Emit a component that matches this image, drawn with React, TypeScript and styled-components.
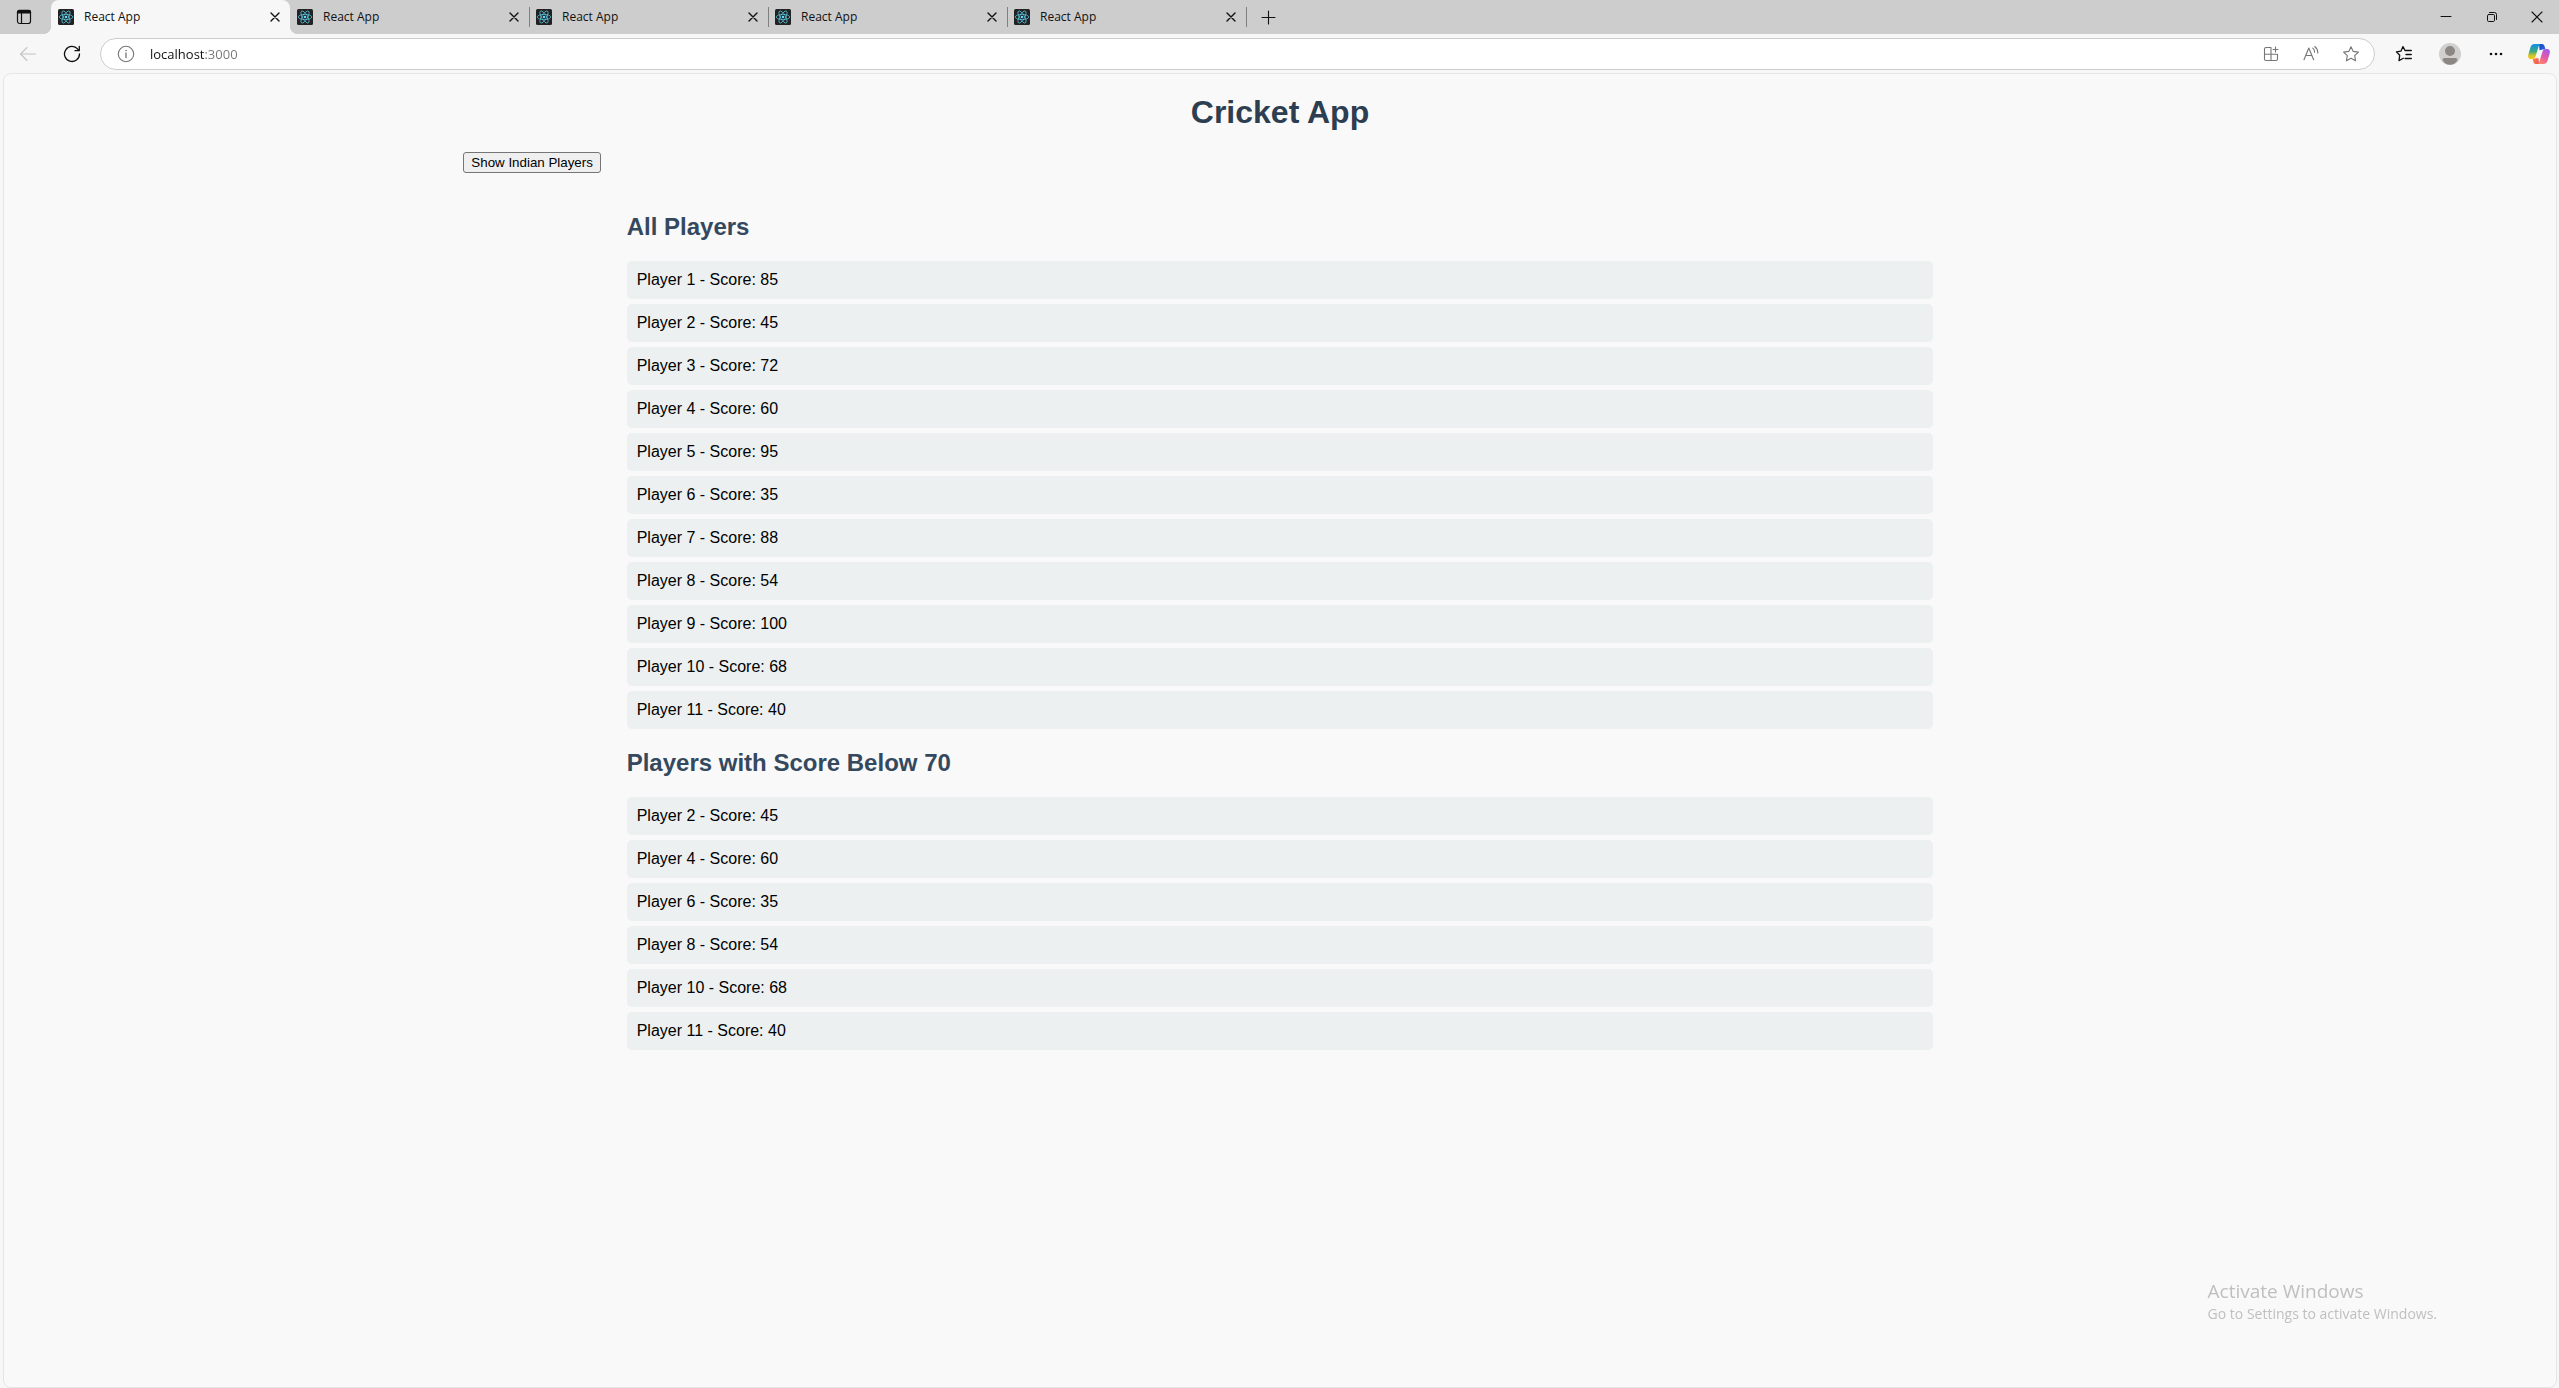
import React, { useState } from "react";
import styled, { createGlobalStyle } from "styled-components";

const GlobalStyle = createGlobalStyle`
  *, *::before, *::after { box-sizing: border-box; }
  body {
    margin: 0;
    background: #f7f7f7;
    color: #000;
    font-family: "Liberation Sans", Arial, sans-serif;
  }
`;

const uiFont = `"Segoe UI", "Open Sans", sans-serif`;

const Window = styled.div`
  display: flex;
  flex-direction: column;
  min-height: 100vh;
  background: #f7f7f7;
`;

/* ---------- tab strip ---------- */

const TabStrip = styled.header`
  display: flex;
  height: 34px;
  background: #cdcdcd;
  font-family: ${uiFont};
`;

const IconButton = styled.button<{ $width: number; $color?: string }>`
  display: flex;
  flex: none;
  align-items: center;
  justify-content: center;
  width: ${(p) => p.$width}px;
  height: 100%;
  padding: 0;
  border: 0;
  background: none;
  color: ${(p) => p.$color ?? "#111"};
`;

const TabList = styled.nav`
  display: flex;
  padding-left: 3px;
`;

const Tab = styled.div<{ $active: boolean; $divided: boolean }>`
  position: relative;
  display: flex;
  align-items: center;
  width: 239px;
  padding: 0 7px;
  border-radius: 8px 8px 0 0;
  background: ${(p) => (p.$active ? "#f7f7f7" : "transparent")};

  &::before {
    content: "";
    display: ${(p) => (p.$divided ? "block" : "none")};
    position: absolute;
    left: 0;
    top: 7px;
    width: 1px;
    height: 20px;
    background: #808080;
  }
`;

const TabFoot = styled.span<{ $side: "left" | "right" }>`
  position: absolute;
  bottom: 0;
  ${(p) => p.$side}: -8px;
  width: 8px;
  height: 8px;
  background: radial-gradient(
    circle at ${(p) => (p.$side === "left" ? "0 0" : "100% 0")},
    transparent 8px,
    #f7f7f7 8px
  );
`;

const TabTitle = styled.button`
  display: flex;
  flex: 1;
  align-items: center;
  gap: 10px;
  height: 100%;
  padding: 0;
  border: 0;
  background: none;
  color: #111;
  font-family: ${uiFont};
  font-size: 12px;
  line-height: 16px;
`;

const NewTabHolder = styled.div`
  position: relative;
  display: flex;

  &::before {
    content: "";
    position: absolute;
    left: 0;
    top: 7px;
    width: 1px;
    height: 20px;
    background: #808080;
  }
`;

const WindowControls = styled.div`
  display: flex;
  margin-left: auto;
`;

/* ---------- toolbar ---------- */

const Toolbar = styled.div`
  display: flex;
  align-items: center;
  height: 39px;
  padding-left: 6px;
`;

const AddressBar = styled.form`
  display: flex;
  flex: 1;
  align-items: center;
  height: 32px;
  margin: 0 6px;
  padding: 0 3px 0 5px;
  border: 1px solid #cccccc;
  border-radius: 16px;
  background: #fff;
`;

const AddressInput = styled.input`
  flex: 1;
  min-width: 0;
  padding: 0 0 0 4px;
  border: 0;
  outline: 0;
  background: linear-gradient(90deg, #111 59px, #767676 59px);
  background-clip: text;
  -webkit-background-clip: text;
  color: #111;
  -webkit-text-fill-color: transparent;
  font-family: ${uiFont};
  font-size: 13px;
  line-height: 20px;
`;

/* ---------- page ---------- */

const Page = styled.main`
  flex: 1;
  margin: 0 2px 0 3px;
  padding: 20px 0;
  border: 1px solid #e6e6e6;
  border-radius: 8px;
  background: #f9f9f9;
`;

const Title = styled.h1`
  margin: 0 0 22px;
  color: #2c3e50;
  font-size: 32px;
  line-height: 36px;
  text-align: center;
`;

const Content = styled.div`
  width: 64%;
  margin: 0 auto;
`;

const ToggleButton = styled.button`
  display: block;
  height: 21px;
  padding: 1px 7px;
  border: 1px solid #767676;
  border-radius: 3px;
  background: #efefef;
  color: #000;
  font-family: "Liberation Sans", Arial, sans-serif;
`;

const Lists = styled.div`
  width: 80%;
  margin: 0 auto;
  padding-top: 20px;
`;

const SectionTitle = styled.h2`
  margin: 20px 0;
  color: #34495e;
  font-size: 24px;
  line-height: 28px;
`;

const PlayerList = styled.ul`
  display: flex;
  flex-direction: column;
  gap: 5px;
  margin: 0;
  padding: 0;
  list-style: none;
`;

const PlayerRow = styled.li`
  padding: 10px;
  border-radius: 5px;
  background: #ecf0f1;
  font-size: 16px;
  line-height: 18px;
`;

const Watermark = styled.aside`
  position: fixed;
  right: 122px;
  bottom: 64px;
  color: #bfbfbf;
  font-family: ${uiFont};
  pointer-events: none;
`;

const WatermarkTitle = styled.p`
  margin: 0;
  font-size: 19px;
  line-height: 26px;
`;

const WatermarkText = styled.p`
  margin: 0;
  font-size: 14px;
  line-height: 20px;
`;

/* ---------- icons ---------- */

const Svg = ({
  w,
  h = w,
  sw = 1,
  children,
}: {
  w: number;
  h?: number;
  sw?: number;
  children: React.ReactNode;
}) => (
  <svg
    width={w}
    height={h}
    viewBox={`0 0 ${w} ${h}`}
    fill="none"
    stroke="currentColor"
    strokeWidth={sw}
    strokeLinecap="round"
    strokeLinejoin="round"
    aria-hidden="true"
  >
    {children}
  </svg>
);

const TabActionsIcon = () => (
  <Svg w={16} sw={1.2}>
    <rect x="1.5" y="1.5" width="13" height="13" rx="2.2" />
    <path d="M1.5 4V3a1.6 1.6 0 0 1 1.6-1.6h9.8A1.6 1.6 0 0 1 14.5 3v1z" fill="currentColor" />
    <path d="M5.5 4v10.5" />
  </Svg>
);

const ReactIcon = () => (
  <svg width="16" height="16" viewBox="0 0 16 16" aria-hidden="true">
    <rect width="16" height="16" rx="1.5" fill="#222" />
    <g fill="none" stroke="#61dafb" strokeOpacity="0.8" strokeWidth="0.8">
      <ellipse cx="8" cy="8" rx="6.8" ry="2.6" />
      <ellipse cx="8" cy="8" rx="6.8" ry="2.6" transform="rotate(60 8 8)" />
      <ellipse cx="8" cy="8" rx="6.8" ry="2.6" transform="rotate(120 8 8)" />
    </g>
    <circle cx="8" cy="8" r="1.3" fill="#61dafb" />
  </svg>
);

const CloseIcon = () => (
  <Svg w={10} sw={1.4}>
    <path d="M1 1l8 8M9 1l-8 8" />
  </Svg>
);

const PlusIcon = () => (
  <Svg w={15} sw={1.1}>
    <path d="M7.5 1v13M1 7.5h13" />
  </Svg>
);

const MinimizeIcon = () => (
  <Svg w={12}>
    <path d="M1 5.5h10" />
  </Svg>
);

const RestoreIcon = () => (
  <Svg w={12}>
    <rect x="1.5" y="3.5" width="7" height="7" rx="1.2" />
    <path d="M3.5 1.5H8.5a2 2 0 0 1 2 2V8.5" />
  </Svg>
);

const WindowCloseIcon = () => (
  <Svg w={12} sw={1.1}>
    <path d="M1 1l10 10M11 1L1 11" />
  </Svg>
);

const BackIcon = () => (
  <Svg w={18} sw={1.1}>
    <path d="M16.5 9H1.5M8 2.5L1.5 9L8 15.5" />
  </Svg>
);

const RefreshIcon = () => (
  <Svg w={18} sw={1.3}>
    <path d="M16.5 9A7.5 7.5 0 1 1 14.8 4.2L16 5.5M16.3 1.5V5.7H12" />
  </Svg>
);

const InfoIcon = () => (
  <Svg w={18} sw={1.1}>
    <circle cx="9" cy="9" r="7.7" />
    <path d="M9 8v4.5" strokeWidth="1.3" />
    <circle cx="9" cy="5.6" r="0.5" fill="currentColor" strokeWidth="0.5" />
  </Svg>
);

const AppsIcon = () => (
  <Svg w={16} sw={1.1}>
    <path d="M8 1.5H3A1.5 1.5 0 0 0 1.5 3V13A1.5 1.5 0 0 0 3 14.5H13A1.5 1.5 0 0 0 14.5 13V8.3H1.5M8 1.5V14.5M12.5 1v5M10 3.5h5" />
  </Svg>
);

const ReadAloudIcon = () => (
  <Svg w={18} sw={1.1}>
    <path d="M2 14.8L6.8 3L11.6 14.8M3.7 10.5H9.9M10.8 3.2a5 5 0 0 1 1.8 4M12.8 1.5a8 8 0 0 1 3 6.5" />
  </Svg>
);

const StarIcon = () => (
  <Svg w={18} sw={1.1}>
    <path d="M9 1.7L11.25 6.4L16.4 7.1L12.65 10.7L13.6 15.8L9 13.35L4.4 15.8L5.35 10.7L1.6 7.1L6.75 6.4Z" />
  </Svg>
);

const FavoritesIcon = () => (
  <Svg w={18} sw={1.3}>
    <path d="M10 5.5L8 1.6L5.9 6.2L1.4 6.8L4.7 10.3L4 15.6L8.3 13.3M10 5.5H16.3M11 9.5H16.3M10 13.5H16.3" />
  </Svg>
);

const AvatarIcon = () => (
  <svg width="22" height="22" viewBox="0 0 22 22" aria-hidden="true">
    <circle cx="11" cy="11" r="11" fill="#d2d0ce" />
    <circle cx="11" cy="8" r="5" fill="#8a8785" />
    <path d="M3.5 17a2 2 0 0 1 2-2h11a2 2 0 0 1 2 2c-1.2 3-4.3 4.7-7.5 4.7S4.7 20 3.5 17z" fill="#8a8785" />
  </svg>
);

const MoreIcon = () => (
  <svg width="14" height="4" viewBox="0 0 14 4" fill="currentColor" aria-hidden="true">
    <circle cx="2" cy="2" r="1.3" />
    <circle cx="7" cy="2" r="1.3" />
    <circle cx="12" cy="2" r="1.3" />
  </svg>
);

const CopilotIcon = () => (
  <svg width="22" height="20" viewBox="0 0 22 20" aria-hidden="true">
    <defs>
      <linearGradient id="cpLeft" x1="0" y1="0" x2="0" y2="1">
        <stop offset="0.1" stopColor="#1593dc" />
        <stop offset="0.5" stopColor="#3cab7c" />
        <stop offset="0.75" stopColor="#c9c52e" />
        <stop offset="1" stopColor="#ffc61a" />
      </linearGradient>
      <linearGradient id="cpRight" x1="0.7" y1="0" x2="0.2" y2="1">
        <stop offset="0" stopColor="#a55be8" />
        <stop offset="0.5" stopColor="#e65aa6" />
        <stop offset="1" stopColor="#ff8a66" />
      </linearGradient>
      <linearGradient id="cpTop" x1="0" y1="0" x2="1" y2="1">
        <stop offset="0" stopColor="#1646c4" />
        <stop offset="1" stopColor="#2a6fe0" />
      </linearGradient>
      <linearGradient id="cpBottom" x1="0" y1="0" x2="1" y2="1">
        <stop offset="0" stopColor="#ff9a3c" />
        <stop offset="1" stopColor="#ee4a5a" />
      </linearGradient>
    </defs>
    <path d="M11 0h3c1.6 0 2.2 1 2.6 2.3L17.5 5.5h-2.3c-2 0-3 1-3.5 2.500z" fill="url(#cpTop)" />
    <path d="M11 20H8c-1.6 0-2.2-1-2.6-2.3L4.5 14.5h2.300c2 0 3-1 3.500-2.500z" fill="url(#cpBottom)" />
    <path d="M6.5 0H13c-1.3 0-1.9 1-2.4 2.5L7.5 12.5c-.5 1.6-1.5 2.5-3.3 2.5H3C.7 15-.3 13.4.2 11L2.6 3C3.2 1 4.5 0 6.5 0z" fill="url(#cpLeft)" />
    <path d="M15.5 20H9c1.3 0 1.9-1 2.4-2.5L14.500 7.500c.5-1.6 1.5-2.5 3.3-2.5H19c2.3 0 3.3 1.6 2.8 4L19.4 17c-.6 2-1.9 3-3.9 3z" fill="url(#cpRight)" />
    <path d="M11.4 6h2.800l-2.600 8.300H8.600z" fill="#f7f7f7" />
  </svg>
);

/* ---------- data ---------- */

type Player = { name: string; score: number };

const scores = [85, 45, 72, 60, 95, 35, 88, 54, 100, 68, 40];
const players: Player[] = scores.map((score, i) => ({ name: `Player ${i + 1}`, score }));
const tabs = [0, 1, 2, 3, 4];

const Players = ({ title, items }: { title: string; items: Player[] }) => (
  <section>
    <SectionTitle>{title}</SectionTitle>
    <PlayerList>
      {items.map((p) => (
        <PlayerRow key={p.name}>{`${p.name} - Score: ${p.score}`}</PlayerRow>
      ))}
    </PlayerList>
  </section>
);

export default function App() {
  const [url, setUrl] = useState("localhost:3000");

  return (
    <>
      <GlobalStyle />
      <Window>
        <TabStrip>
          <IconButton $width={48} aria-label="Tab actions">
            <TabActionsIcon />
          </IconButton>
          <TabList aria-label="Tabs">
            {tabs.map((i) => (
              <Tab key={i} $active={i === 0} $divided={i > 1}>
                {i === 0 && <TabFoot $side="left" />}
                {i === 0 && <TabFoot $side="right" />}
                <TabTitle>
                  <ReactIcon />
                  React App
                </TabTitle>
                <IconButton $width={16} aria-label="Close tab">
                  <CloseIcon />
                </IconButton>
              </Tab>
            ))}
          </TabList>
          <NewTabHolder>
            <IconButton $width={44} aria-label="New tab">
              <PlusIcon />
            </IconButton>
          </NewTabHolder>
          <WindowControls>
            <IconButton $width={46} aria-label="Minimize">
              <MinimizeIcon />
            </IconButton>
            <IconButton $width={46} aria-label="Restore">
              <RestoreIcon />
            </IconButton>
            <IconButton $width={44} aria-label="Close">
              <WindowCloseIcon />
            </IconButton>
          </WindowControls>
        </TabStrip>

        <Toolbar>
          <IconButton $width={44} $color="#c4c4c4" aria-label="Back">
            <BackIcon />
          </IconButton>
          <IconButton $width={44} aria-label="Refresh">
            <RefreshIcon />
          </IconButton>
          <AddressBar onSubmit={(e) => e.preventDefault()}>
            <IconButton type="button" $width={40} $color="#767676" aria-label="Site information">
              <InfoIcon />
            </IconButton>
            <AddressInput
              aria-label="Address"
              value={url}
              onChange={(e) => setUrl(e.target.value)}
            />
            <IconButton type="button" $width={40} $color="#767676" aria-label="Apps">
              <AppsIcon />
            </IconButton>
            <IconButton type="button" $width={40} $color="#767676" aria-label="Read aloud">
              <ReadAloudIcon />
            </IconButton>
            <IconButton type="button" $width={40} $color="#767676" aria-label="Add to favorites">
              <StarIcon />
            </IconButton>
          </AddressBar>
          <IconButton $width={46} aria-label="Favorites">
            <FavoritesIcon />
          </IconButton>
          <IconButton $width={46} aria-label="Profile">
            <AvatarIcon />
          </IconButton>
          <IconButton $width={46} aria-label="Settings and more">
            <MoreIcon />
          </IconButton>
          <IconButton $width={40} aria-label="Copilot">
            <CopilotIcon />
          </IconButton>
        </Toolbar>

        <Page>
          <Title>Cricket App</Title>
          <Content>
            <ToggleButton>Show Indian Players</ToggleButton>
            <Lists>
              <Players title="All Players" items={players} />
              <Players
                title="Players with Score Below 70"
                items={players.filter((p) => p.score < 70)}
              />
            </Lists>
          </Content>
        </Page>

        <Watermark>
          <WatermarkTitle>Activate Windows</WatermarkTitle>
          <WatermarkText>Go to Settings to activate Windows.</WatermarkText>
        </Watermark>
      </Window>
    </>
  );
}
